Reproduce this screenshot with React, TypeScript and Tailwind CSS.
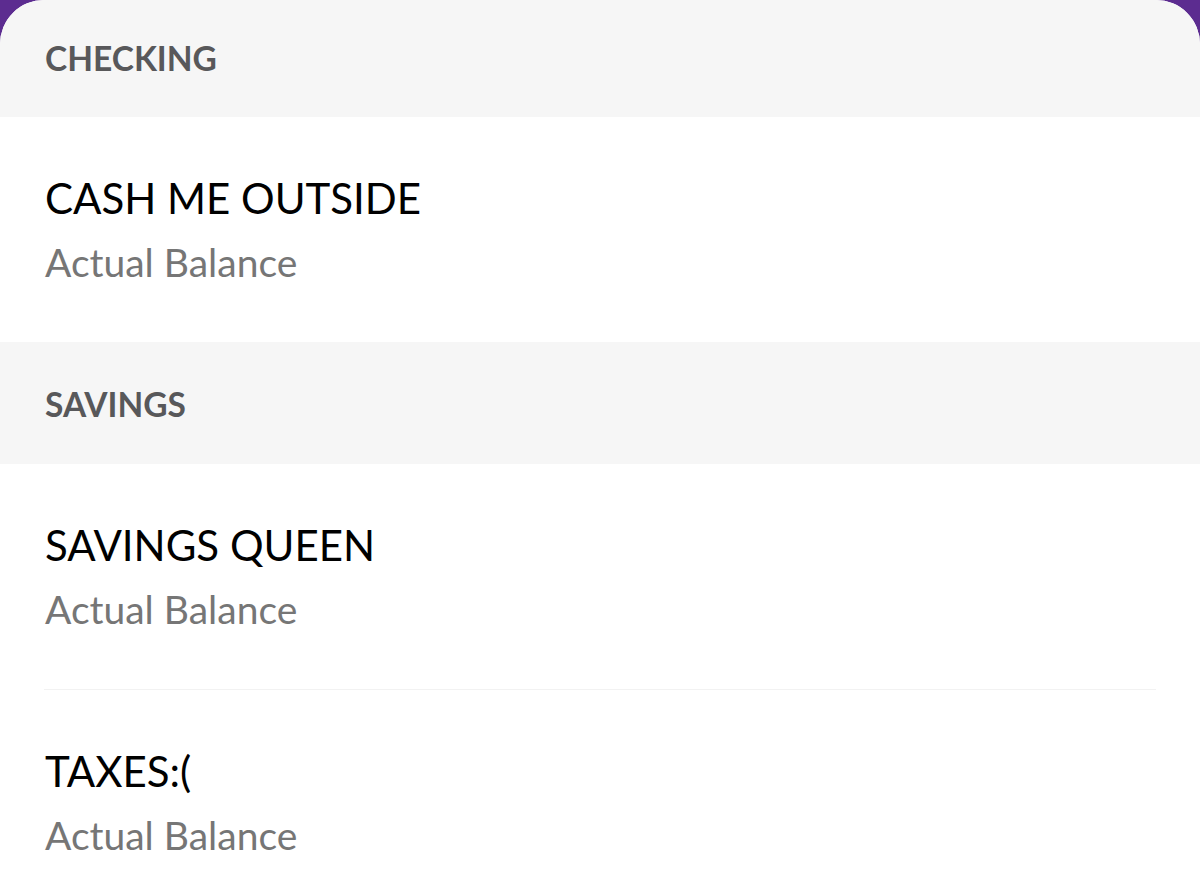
export default function App() {
  return (
    <div className="min-h-[879px] bg-[#5c2c90]" style={{ fontFamily: "Lato, 'Noto Sans', sans-serif" }}>
      <div className="h-[879px] overflow-hidden rounded-t-[44px] bg-white">
        <SectionHeader label="CHECKING" className="h-[117px] pt-[38px]" />
        <AccountRow name="CASH ME OUTSIDE" />
        <SectionHeader label="SAVINGS" className="h-[122px] pt-[42px]" />
        <AccountRow name="SAVINGS QUEEN" />
        <div className="mx-[44px] h-px bg-[#f2f2f2]" />
        <AccountRow name="TAXES:(" />
      </div>
    </div>
  );
}

function SectionHeader({ label, className }: { label: string; className: string }) {
  return (
    <div className={`bg-[#f6f6f6] px-[45px] ${className}`}>
      <div className="text-[33.5px] font-bold leading-[40px] text-[#58585a]">{label}</div>
    </div>
  );
}

function AccountRow({ name }: { name: string }) {
  return (
    <div className="px-[45px] pt-[57px] pb-[56px]">
      <div className="text-[42px] leading-[48px] text-black">{name}</div>
      <div className="mt-[16px] text-[39px] leading-[48px] text-[#767676]">Actual Balance</div>
    </div>
  );
}
